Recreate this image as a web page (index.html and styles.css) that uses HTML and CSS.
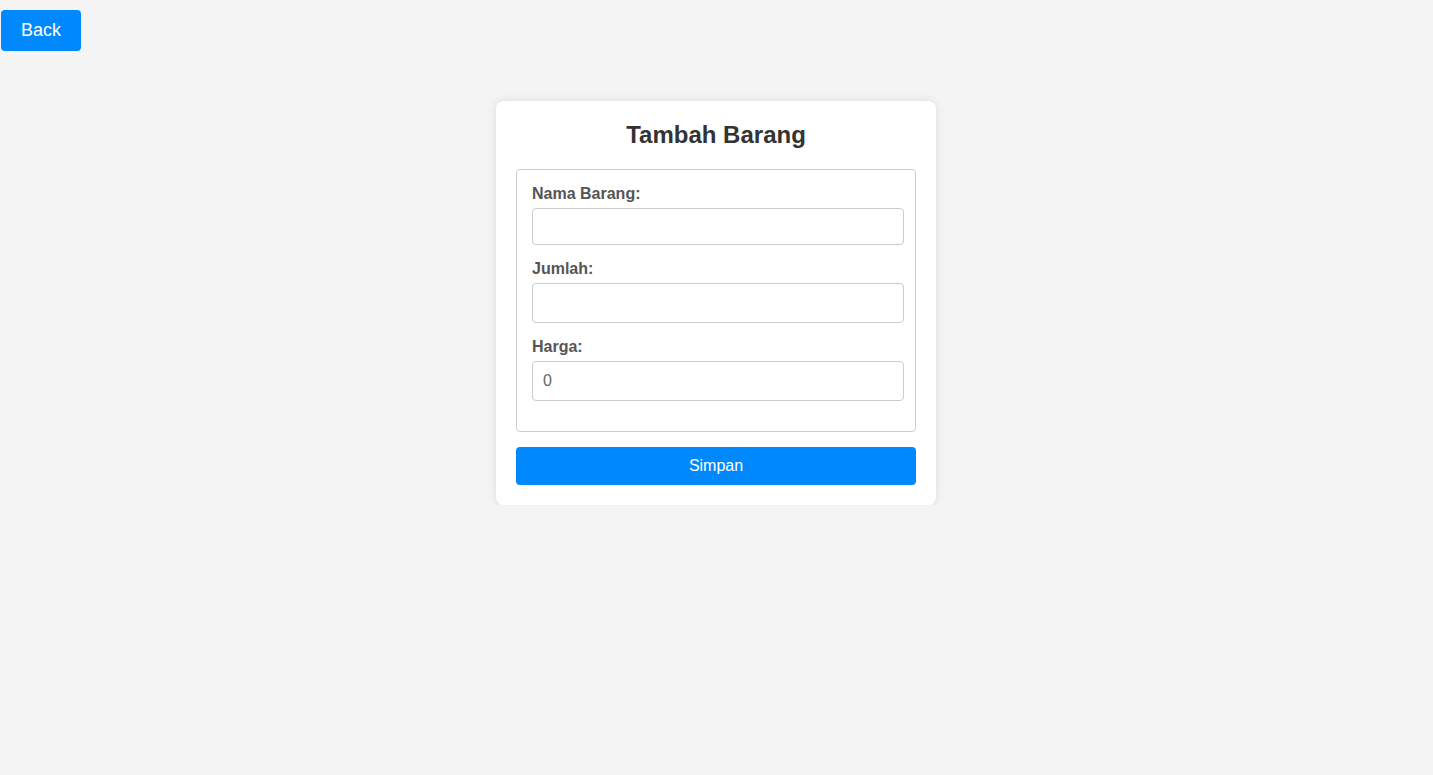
FILE: index.html
```html
<!DOCTYPE html>
<html lang="id">
<head>
<meta charset="utf-8">
<title>Tambah Barang</title>
<link rel="stylesheet" href="styles.css">
</head>
<body>
<div class="topbar">
  <button class="back-btn" type="button">Back</button>
</div>
<main class="page">
  <div class="card">
    <h2 class="title">Tambah Barang</h2>
    <form class="form">
      <fieldset class="fields">
        <label class="label" for="nama">Nama Barang:</label>
        <input class="input input-text" id="nama" type="text">
        <label class="label" for="jumlah">Jumlah:</label>
        <input class="input" id="jumlah" type="text">
        <label class="label" for="harga">Harga:</label>
        <input class="input" id="harga" type="text" value="0">
      </fieldset>
      <button class="submit-btn" type="button">Simpan</button>
    </form>
  </div>
</main>
</body>
</html>
```
FILE: styles.css
```css
* { box-sizing: border-box; }
html, body {
  margin: 0;
  padding: 0;
  background: #f4f4f4;
  font-family: "Liberation Sans", Arial, Helvetica, sans-serif;
}
.topbar {
  padding: 10px 0 0 1px;
  height: 50px;
}
.back-btn {
  display: block;
  width: 80px;
  height: 41px;
  border: none;
  border-radius: 4px;
  background: #0088ff;
  color: #fff;
  font-family: inherit;
  font-size: 18px;
  padding: 0;
}
.page {
  display: flex;
  justify-content: center;
  padding-top: 51px;
  padding-right: 1px;
}
.card {
  width: 440px;
  background: #fff;
  border-radius: 8px;
  box-shadow: 0 0 10px rgba(0, 0, 0, 0.1);
  padding: 20px;
}
.title {
  margin: 0 0 20px;
  text-align: center;
  font-size: 24px;
  line-height: 28px;
  font-weight: bold;
  color: #333;
}
.form { margin: 0; }
.fields {
  margin: 0;
  border: 1px solid #ccc;
  border-radius: 4px;
  padding: 15px;
  display: flex;
  flex-direction: column;
  min-width: 0;
}
.label {
  display: block;
  font-size: 16px;
  line-height: 18px;
  font-weight: bold;
  color: #555;
  margin-bottom: 5px;
}
.input {
  display: block;
  width: 372px;
  height: 40px;
  border: 1px solid #ccc;
  border-radius: 4px;
  padding: 0 10px;
  font-family: inherit;
  font-size: 16px;
  color: #666;
  background: #fff;
  margin: 0 0 15px;
  outline: none;
}
.input-text { height: 37px; }
.submit-btn {
  display: block;
  width: 400px;
  height: 38px;
  margin-top: 15px;
  border: none;
  border-radius: 4px;
  background: #0088ff;
  color: #fff;
  font-family: inherit;
  font-size: 16px;
  padding: 0;
}
```
